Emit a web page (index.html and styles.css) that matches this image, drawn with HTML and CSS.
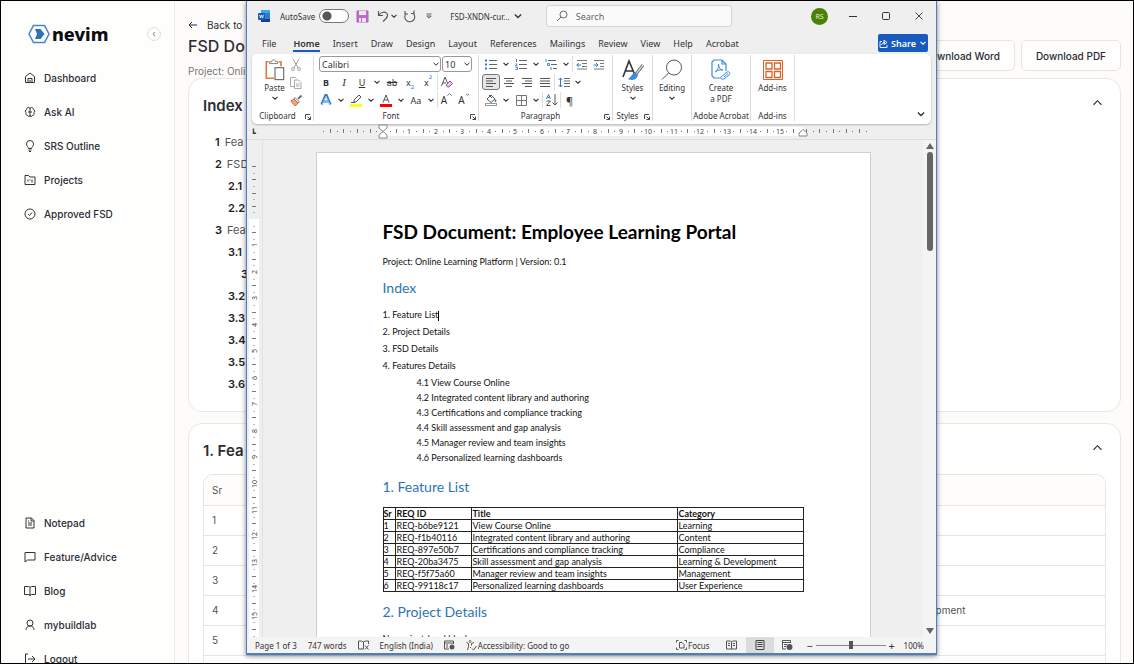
FILE: index.html
```html
<!DOCTYPE html>
<html lang="en">
<head>
    <meta charset="UTF-8">
    <meta name="viewport" content="width=device-width, initial-scale=1.0">
    <title>Nevim - FSD Document</title>
    <link rel="stylesheet" href="styles.css">
</head>
<body>

    <!-- shared icons -->
    <svg class="sprite" aria-hidden="true">
        <symbol id="chev" viewBox="0 0 8 8"><path d="M1.5 2.8 4 5.2l2.5-2.4" fill="none" stroke="currentColor" stroke-width="1.1"/></symbol>
        <symbol id="chev-up" viewBox="0 0 8 8"><path d="M.5 6 4 2.4 7.5 6" fill="none" stroke="currentColor" stroke-width="1"/></symbol>
        <symbol id="launch" viewBox="0 0 8 8"><path d="M1.500 6V1.500H6M3.500 3.500l3 3M6.500 3.500v3h-3" fill="none" stroke="currentColor" stroke-width=".9"/></symbol>
    </svg>

    <div class="app">
        <aside class="sidebar">
            <div class="brand">
                <a class="logo" href="#" aria-label="nevim">
                    <svg width="22" height="20" viewBox="0 0 22 20">
                        <path d="M5.500 1.500h11L21 10l-4.500 8.500h-11L1 10z" fill="none" stroke="#4a86cf" stroke-width="1.600"/>
                        <path d="M7 5h5.500l4 5-4 5H7l2-5z" fill="#2f6fc0"/>
                    </svg>
                    <span>nevim</span>
                </a>
                <button class="collapse" aria-label="Collapse sidebar">‹</button>
            </div>
            <nav class="menu">
                <a href="#"><svg viewBox="0 0 24 24"><path d="M3 9l9-7 9 7v12H3zM8 21v-8h8v8M12 21v-5"/></svg>Dashboard</a>
                <a href="#"><svg viewBox="0 0 24 24"><path d="M12 3v18M12 5C9 1 5 3 5.500 7 2 8 2 12 4 13c-1 4 1 6 3.500 6 1 3 4 2.500 4.500 0M12 5c3-4 7-2 6.500 2 3.500 1 3.500 5 1.500 6 1 4-1 6-3.500 6-1 3-4 2.500-4.500 0M8 12h8"/></svg>Ask AI</a>
                <a href="#"><svg viewBox="0 0 24 24"><path d="M9 17c0-3-4-4-4-9a7 7 0 0114 0c0 5-4 6-4 9zM9 20h6M10 23h4"/></svg>SRS Outline</a>
                <a href="#"><svg viewBox="0 0 24 24"><path d="M2 3h7l3 3h10v15H2zM8 11v4M12 11v2M16 11v6"/></svg>Projects</a>
                <a href="#"><svg viewBox="0 0 24 24"><circle cx="12" cy="12" r="10"/><path d="M8 12l3 3 5-6"/></svg>Approved FSD</a>
            </nav>
            <nav class="menu menu-bottom">
                <a href="#"><svg viewBox="0 0 24 24"><path d="M4 2h11l5 5v15H4zM14 2v6h6M8 12h8M8 16h8M8 8h2"/></svg>Notepad</a>
                <a href="#"><svg viewBox="0 0 24 24"><path d="M2 3h20v15H7l-5 4z"/></svg>Feature/Advice</a>
                <a href="#"><svg viewBox="0 0 24 24"><path d="M12 6c0-2-1-3-3-3H1v16h8c2 0 3 1 3 3 0-2 1-3 3-3h8V3h-8c-2 0-3 1-3 3v16"/></svg>Blog</a>
                <a href="#"><svg viewBox="0 0 24 24"><circle cx="12" cy="8" r="6"/><path d="M4 22c0-5 3-8 8-8s8 3 8 8"/></svg>mybuildlab</a>
                <a href="#"><svg viewBox="0 0 24 24"><path d="M8 2H3v20h5M8 12h14M16 6l6 6-6 6"/></svg>Logout</a>
            </nav>
        </aside>

        <main class="content">
            <header class="page-head">
                <div>
                    <a class="back" href="#"><svg width="10" height="8" viewBox="0 0 10 8"><path d="M9 4H1M4 1 1 4l3 3" fill="none" stroke="currentColor"/></svg>Back to</a>
                    <h1>FSD Do</h1>
                    <p>Project: Onli</p>
                </div>
                <div class="downloads">
                    <button>Download Word</button>
                    <button>Download PDF</button>
                </div>
            </header>

            <section class="card index-card">
                <div class="card-head">
                    <h2>Index</h2>
                    <button aria-label="Collapse"><svg width="9" height="9"><use href="#chev-up"/></svg></button>
                </div>
                <ul class="toc">
                    <li><b>1</b>Fea</li>
                    <li><b>2</b>FSD</li>
                    <li class="sub"><b>2.1</b></li>
                    <li class="sub"><b>2.2</b></li>
                    <li><b>3</b>Fea</li>
                    <li class="sub"><b>3.1</b></li>
                    <li class="sub2"><b>3</b></li>
                    <li class="sub"><b>3.2</b></li>
                    <li class="sub"><b>3.3</b></li>
                    <li class="sub"><b>3.4</b></li>
                    <li class="sub"><b>3.5</b></li>
                    <li class="sub"><b>3.6</b></li>
                </ul>
            </section>

            <section class="card">
                <div class="card-head">
                    <h2>1. Fea</h2>
                    <button aria-label="Collapse"><svg width="9" height="9"><use href="#chev-up"/></svg></button>
                </div>
                <div class="table-wrap">
                    <table>
                        <tr><th>Sr</th><th></th></tr>
                        <tr><td>1</td><td></td></tr>
                        <tr><td>2</td><td></td></tr>
                        <tr><td>3</td><td></td></tr>
                        <tr><td>4</td><td>Development</td></tr>
                        <tr><td>5</td><td></td></tr>
                        <tr><td></td><td></td></tr>
                    </table>
                </div>
            </section>
        </main>
    </div>

    <div class="word">
        <div class="titlebar">
            <svg class="word-icon" width="12" height="12" viewBox="0 0 12 12"><rect x="3" y="0" width="9" height="12" rx="1" fill="#2b7cd3"/><rect x="3" y="0" width="9" height="3" fill="#41a5ee"/><rect x="3" y="9" width="9" height="3" fill="#103f91"/><rect x="0" y="3" width="7" height="7" rx="1" fill="#185abd"/><path d="M1.500 4.800l1 3.200 1-3 1 3 1-3.200" fill="none" stroke="#fff" stroke-width=".8"/></svg>
            <label class="autosave">AutoSave <input type="checkbox"></label>
            <button aria-label="Save"><svg width="13" height="13" viewBox="0 0 13 13"><path d="M1 1h11v11H1z" fill="#b86fc6" stroke="#b060c0"/><path d="M3 1h7v4H3zM3 8h2v4H3zM6 8h4v4H6z" fill="#f4e3f7"/></svg></button>
            <button class="undo" aria-label="Undo"><svg width="13" height="13" viewBox="0 0 13 13"><path d="M1.500 1v4.500H6M1.500 5.500C4 2 8 1 10 3.500c2 3-1 5-4 8" fill="none" stroke="#555" stroke-width="1.100"/></svg><svg width="8" height="8"><use href="#chev"/></svg></button>
            <button aria-label="Redo"><svg width="13" height="13" viewBox="0 0 13 13"><path d="M2 1v3h3M3 3.500a5 5 0 107-.5M11 .5V3.500H8" fill="none" stroke="#555" stroke-width="1.100"/></svg></button>
            <button class="customize" aria-label="Customize toolbar"><svg width="8" height="8" viewBox="0 0 8 8"><path d="M1.500 2h5M1.800 4h4.400L4 6.200z" fill="none" stroke="#555" stroke-width=".9"/></svg></button>
            <button class="filename">FSD-XNDN-cur... <svg width="10" height="10"><use href="#chev"/></svg></button>
            <div class="search">
                <svg width="12" height="12" viewBox="0 0 12 12"><circle cx="7.500" cy="4.500" r="3.500" fill="none" stroke="#666"/><path d="M5 7 1 11" stroke="#666"/></svg>
                <input type="text" placeholder="Search" aria-label="Search">
            </div>
            <span class="avatar">RS</span>
            <div class="win-buttons">
                <button aria-label="Minimize"><svg width="8" height="8"><path d="M0 4.500h8" stroke="#333"/></svg></button>
                <button aria-label="Maximize"><svg width="8" height="8"><rect x=".5" y=".5" width="7" height="7" rx="1" fill="none" stroke="#333"/></svg></button>
                <button aria-label="Close"><svg width="8" height="8"><path d="M.5.5l7 7M7.500.5l-7 7" stroke="#333" stroke-width=".9"/></svg></button>
            </div>
        </div>

        <div class="tabs">
            <button class="file">File</button>
            <button class="active">Home</button>
            <button>Insert</button>
            <button>Draw</button>
            <button>Design</button>
            <button>Layout</button>
            <button>References</button>
            <button>Mailings</button>
            <button>Review</button>
            <button>View</button>
            <button>Help</button>
            <button>Acrobat</button>
            <button class="share"><svg width="9" height="9" viewBox="0 0 9 9"><path d="M3 2.500H1v6h7V6M2.500 6c.5-2 2-2.500 3.500-2.500M5 1l3 2.500-3 2z" fill="none" stroke="#fff" stroke-width=".9"/></svg>Share<svg width="8" height="8"><use href="#chev"/></svg></button>
        </div>

        <div class="ribbon">
            <div class="group clipboard">
                <div class="tools side">
                    <button class="big"><svg width="22" height="22" viewBox="0 0 22 24"><path d="M4 3H1.500v18H10M15 3h2.500v5" fill="none" stroke="#e07b45" stroke-width="1.800"/><path d="M5 5V3h2.500c0-3 4-3 4 0H14v2z" fill="#fff" stroke="#777"/><rect x="11" y="9.500" width="9.500" height="13" fill="#fff" stroke="#666" stroke-width="1.200"/></svg>Paste<svg width="8" height="8"><use href="#chev"/></svg></button>
                    <div class="stack">
                        <button aria-label="Cut"><svg width="10" height="12" viewBox="0 0 10 12"><path d="M2 0l5 9M8 0 3 9" stroke="#999" fill="none" stroke-width=".9"/><circle cx="2" cy="10" r="1.500" fill="none" stroke="#aaa"/><circle cx="8" cy="10" r="1.500" fill="none" stroke="#aaa"/></svg></button>
                        <button aria-label="Copy"><svg width="12" height="12" viewBox="0 0 12 12"><path d="M4 9.500H.5v-9h5l1 1" fill="none" stroke="#aaa"/><path d="M4.500 3h4L11 5.500v6H4.500zM6 7h3.500M6 9h3.500" fill="none" stroke="#aaa"/></svg></button>
                        <button aria-label="Format Painter"><svg width="12" height="12" viewBox="0 0 12 12"><path d="M11.500.5 8 4" stroke="#555" stroke-width="1.600"/><path d="M5 2.500 9.500 7 8 8 4 4z" fill="#fff" stroke="#666" stroke-width=".8"/><path d="M4 4 .8 6l4.500 5L8 8z" fill="#f3a27b" stroke="#d9622b"/></svg></button>
                    </div>
                </div>
                <div class="caption launcher">Clipboard<svg width="8" height="8"><use href="#launch"/></svg></div>
            </div>

            <div class="group font">
                <div class="tools">
                    <div class="row">
                        <select class="face" aria-label="Font"><option>Calibri</option></select>
                        <select class="size" aria-label="Font size"><option>10</option></select>
                    </div>
                    <div class="row">
                        <button class="tool"><b>B</b></button>
                        <button class="tool"><i>I</i></button>
                        <button class="tool"><u>U</u></button>
                        <button class="drop" aria-label="Underline style"><svg width="8" height="8"><use href="#chev"/></svg></button>
                        <button class="tool"><s>ab</s></button>
                        <button class="tool">x<sub>2</sub></button>
                        <button class="tool">x<sup>2</sup></button>
                        <button class="tool rule" aria-label="Clear formatting"><svg width="12" height="12" viewBox="0 0 12 12"><path d="M.5 10 4 1l2.500 6M2 7h3" fill="none" stroke="#555"/><path d="M5 9l4-4 2.500 2.500-3.500 3.500H6.500z" fill="#e6c5ee" stroke="#a04bb5"/></svg></button>
                    </div>
                    <div class="row">
                        <button class="tool" aria-label="Text effects"><svg width="12" height="12" viewBox="0 0 12 12"><path d="M1.500 10.500 5.500 1h1l4 9.500M3.500 7.500h5" fill="none" stroke="#2f7bd0" stroke-width="2.200"/><path d="M2 10.500 6 2l4 8.500M4 7.500h4" fill="none" stroke="#b9d8f5" stroke-width=".6"/></svg></button>
                        <button class="drop" aria-label="More effects"><svg width="8" height="8"><use href="#chev"/></svg></button>
                        <button class="tool" aria-label="Highlight"><svg width="13" height="13" viewBox="0 0 13 13"><path d="M4 6l5-5 2 2-5 5H4z" fill="#fff" stroke="#555"/><path d="M1 8.500h4" stroke="#555"/><rect x="0" y="10" width="12" height="3" fill="#ffff1a"/></svg></button>
                        <button class="drop" aria-label="Highlight color"><svg width="8" height="8"><use href="#chev"/></svg></button>
                        <button class="tool" aria-label="Font color"><svg width="13" height="13" viewBox="0 0 13 13"><path d="M3 8.500 6 1l3 7.500M4 6h4" fill="none" stroke="#555"/><rect x="0" y="10" width="12" height="3" fill="#f00"/></svg></button>
                        <button class="drop" aria-label="More font colors"><svg width="8" height="8"><use href="#chev"/></svg></button>
                        <button class="tool">Aa</button>
                        <button class="drop" aria-label="Change case"><svg width="8" height="8"><use href="#chev"/></svg></button>
                        <button class="tool rule grow">A<svg width="5" height="5"><use href="#chev-up"/></svg></button>
                        <button class="tool grow">A<svg width="5" height="5"><use href="#chev"/></svg></button>
                    </div>
                </div>
                <div class="caption launcher">Font<svg width="8" height="8"><use href="#launch"/></svg></div>
            </div>

            <div class="group paragraph">
                <div class="tools">
                    <div class="row">
                        <button class="tool" aria-label="Bullets"><svg width="12" height="11" viewBox="0 0 12 11"><path d="M4 1.500h8M4 5.500h8M4 9.500h8" stroke="#666"/><path d="M0 1.500h2M0 5.500h2M0 9.500h2" stroke="#2f7bd0" stroke-width="2"/></svg></button>
                        <button class="drop" aria-label="Bullet library"><svg width="8" height="8"><use href="#chev"/></svg></button>
                        <button class="tool" aria-label="Numbering"><svg width="12" height="11" viewBox="0 0 12 11"><path d="M4 1.500h8M4 5.500h8M4 9.500h8" stroke="#666"/><path d="M1.500 0v3M.5 5h1.500L.5 7h2M.5 8.500h2v2h-2" fill="none" stroke="#2f7bd0" stroke-width=".9"/></svg></button>
                        <button class="drop" aria-label="Number library"><svg width="8" height="8"><use href="#chev"/></svg></button>
                        <button class="tool" aria-label="Multilevel list"><svg width="12" height="11" viewBox="0 0 12 11"><path d="M3 1.500h8M6 5.500h6M8 9.500h4" stroke="#666"/><path d="M1 0v3M2.500 4.500h2v2h-2zM6 8v3" fill="none" stroke="#2f7bd0" stroke-width=".9"/></svg></button>
                        <button class="drop" aria-label="List library"><svg width="8" height="8"><use href="#chev"/></svg></button>
                        <button class="tool rule" aria-label="Decrease indent"><svg width="12" height="11" viewBox="0 0 12 11"><path d="M1 1.500h10M6 4.500h5M6 7.500h5M1 10h10" stroke="#777"/><path d="M5 6H.8M2.800 4 .8 6l2 2" fill="none" stroke="#2f7bd0"/></svg></button>
                        <button class="tool" aria-label="Increase indent"><svg width="12" height="11" viewBox="0 0 12 11"><path d="M1 1.500h10M7 4.500h4M7 7.500h4M1 10h10" stroke="#777"/><path d="M.5 6h4.500M3 4l2 2-2 2" fill="none" stroke="#2f7bd0"/></svg></button>
                    </div>
                    <div class="row">
                        <button class="tool pressed" aria-label="Align left"><svg width="12" height="11" viewBox="0 0 12 11"><path d="M1 1.500h10M1 4h7M1 6.500h10M1 9.500h7" stroke="#555"/></svg></button>
                        <button class="tool" aria-label="Center"><svg width="12" height="11" viewBox="0 0 12 11"><path d="M1 1.500h10M3 4h6M1 6.500h10M3 9.500h6" stroke="#555"/></svg></button>
                        <button class="tool" aria-label="Align right"><svg width="12" height="11" viewBox="0 0 12 11"><path d="M1 1.500h10M4 4h7M1 6.500h10M4 9.500h7" stroke="#555"/></svg></button>
                        <button class="tool" aria-label="Justify"><svg width="12" height="11" viewBox="0 0 12 11"><path d="M1 1.500h10M1 4h10M1 6.500h10M1 9.500h10" stroke="#555"/></svg></button>
                        <button class="tool rule" aria-label="Line spacing"><svg width="12" height="11" viewBox="0 0 12 11"><path d="M6 1.500h6M6 4h6M6 6.500h6M6 9.500h6" stroke="#666"/><path d="M2.500 1v9M.5 3l2-2 2 2M.5 8l2 2 2-2" fill="none" stroke="#2f7bd0"/></svg></button>
                        <button class="drop" aria-label="Spacing options"><svg width="8" height="8"><use href="#chev"/></svg></button>
                    </div>
                    <div class="row">
                        <button class="tool" aria-label="Shading"><svg width="12" height="12" viewBox="0 0 12 12"><path d="M2 5l4-4 4 4-4 3.500zM4 1l3 3" fill="none" stroke="#555"/><path d="M10.500 5.500v2.500" stroke="#2f7bd0" stroke-width="1.500"/><rect x=".5" y="9.500" width="11" height="2" fill="#fff" stroke="#999"/></svg></button>
                        <button class="drop" aria-label="Shading color"><svg width="8" height="8"><use href="#chev"/></svg></button>
                        <button class="tool" aria-label="Borders"><svg width="11" height="11" viewBox="0 0 11 11"><path d="M.5.5h10v10H.5zM5.500.5v10M.5 5.500h10" fill="none" stroke="#777"/></svg></button>
                        <button class="drop" aria-label="Border options"><svg width="8" height="8"><use href="#chev"/></svg></button>
                        <button class="tool rule" aria-label="Sort"><svg width="12" height="12" viewBox="0 0 12 12"><path d="M.5 5 2.500.5 4.500 5M1.300 3.500h2.500" fill="none" stroke="#2f7bd0"/><path d="M.5 7h4l-4 4.500h4M9 0v11M6.500 8.500 9 11l2.500-2.500" fill="none" stroke="#555"/></svg></button>
                        <button class="tool rule mark">¶</button>
                    </div>
                </div>
                <div class="caption launcher">Paragraph<svg width="8" height="8"><use href="#launch"/></svg></div>
            </div>

            <div class="group styles">
                <div class="tools side">
                    <button class="big"><svg width="24" height="22" viewBox="0 0 24 22"><path d="M2 18 8 2l5.500 13M4.500 12H12" fill="none" stroke="#333" stroke-width="1.600"/><path d="M22 6l-7 9" stroke="#777" stroke-width="3"/><path d="M22 6l-7 9" stroke="#fff"/><path d="M15 14c-4-1-4 4-8 6 4 2 9 1 10-4z" fill="#3c8be0"/></svg>Styles<svg width="8" height="8"><use href="#chev"/></svg></button>
                </div>
                <div class="caption launcher">Styles<svg width="8" height="8"><use href="#launch"/></svg></div>
            </div>

            <div class="group editing">
                <div class="tools side">
                    <button class="big"><svg width="22" height="22" viewBox="0 0 22 22"><circle cx="13" cy="8.500" r="7.500" fill="none" stroke="#555"/><path d="M7.500 14 1 20.500" stroke="#555"/></svg>Editing<svg width="8" height="8"><use href="#chev"/></svg></button>
                </div>
            </div>

            <div class="group acrobat">
                <div class="tools side">
                    <button class="big"><svg width="20" height="22" viewBox="0 0 20 22"><path d="M10 19H3l-2-2V3l2-2h8l4 4v7M11 1v4h4" fill="none" stroke="#3f8ddb" stroke-width="1.200"/><path d="M4 13c3-2 4-5 3.500-8C8 10 10 11 12 11c-3-.5-5 0-8 2z" fill="none" stroke="#3f8ddb"/><path d="M10 18l6-5c2-1 4 1 2 3l-5 4c-2 1-4-1-3-2zM13 18l4-3.500" fill="#fff" stroke="#3f8ddb"/></svg>Create<br>a PDF</button>
                </div>
                <div class="caption">Adobe Acrobat</div>
            </div>

            <div class="group addins">
                <div class="tools side">
                    <button class="big"><svg width="20" height="22" viewBox="0 0 20 22"><path d="M.5 1.500h19v19H.5z" fill="none" stroke="#d9622b"/><path d="M3 4h6v6H3zM11.500 4h6v6h-6zM3 12.500h6v6H3zM11.500 12.500h6v6h-6z" fill="none" stroke="#d9622b" stroke-width="1.300"/></svg>Add-ins</button>
                </div>
                <div class="caption">Add-ins</div>
            </div>

            <button class="ribbon-toggle" aria-label="Collapse ribbon"><svg width="10" height="10"><use href="#chev"/></svg></button>
        </div>

        <div class="ruler-row">
            <span class="tab-stop">┗</span>
            <svg class="h-ruler" id="h-ruler" height="16"></svg>
        </div>

        <div class="work">
            <div class="v-ruler-box"><svg class="v-ruler" id="v-ruler" width="16"></svg></div>
            <div class="desk">
                <article class="page">
                    <h1>FSD Document: Employee Learning Portal</h1>
                    <p>Project: Online Learning Platform | Version: 0.1</p>
                    <h2>Index</h2>
                    <ul class="chapters">
                        <li>1. Feature List<span class="caret"></span></li>
                        <li>2. Project Details</li>
                        <li>3. FSD Details</li>
                        <li>4. Features Details</li>
                    </ul>
                    <ul class="features">
                        <li>4.1 View Course Online</li>
                        <li>4.2 Integrated content library and authoring</li>
                        <li>4.3 Certifications and compliance tracking</li>
                        <li>4.4 Skill assessment and gap analysis</li>
                        <li>4.5 Manager review and team insights</li>
                        <li>4.6 Personalized learning dashboards</li>
                    </ul>
                    <h2>1. Feature List</h2>
                    <table>
                        <colgroup><col class="c-sr"><col class="c-id"><col class="c-title"><col></colgroup>
                        <tr><th>Sr</th><th>REQ ID</th><th>Title</th><th>Category</th></tr>
                        <tr><td>1</td><td>REQ-b6be9121</td><td>View Course Online</td><td>Learning</td></tr>
                        <tr><td>2</td><td>REQ-f1b40116</td><td>Integrated content library and authoring</td><td>Content</td></tr>
                        <tr><td>3</td><td>REQ-897e50b7</td><td>Certifications and compliance tracking</td><td>Compliance</td></tr>
                        <tr><td>4</td><td>REQ-20ba3475</td><td>Skill assessment and gap analysis</td><td>Learning &amp; Development</td></tr>
                        <tr><td>5</td><td>REQ-f5f75a60</td><td>Manager review and team insights</td><td>Management</td></tr>
                        <tr><td>6</td><td>REQ-99118c17</td><td>Personalized learning dashboards</td><td>User Experience</td></tr>
                    </table>
                    <h2>2. Project Details</h2>
                    <p>No project-level blocks.</p>
                </article>
            </div>
            <div class="scrollbar">
                <svg width="8" height="6"><path d="M4 0l4 6H0z" fill="#666"/></svg>
                <span class="thumb"></span>
                <svg width="8" height="6"><path d="M0 0h8L4 6z" fill="#666"/></svg>
            </div>
        </div>

        <div class="status">
            <span>Page 1 of 3</span>
            <span>747 words</span>
            <svg width="11" height="10" viewBox="0 0 11 10"><path d="M5.500 9H.5V1h3l2 1 2-1h3v3M5.500 2v7M7 5.500l3.500 4M10.500 5.500 7 9.500" fill="none" stroke="#555"/></svg>
            <span>English (India)</span>
            <svg width="11" height="10" viewBox="0 0 11 10"><path d="M5 9H.5V1h9v3M.5 3h9M2 5h2M2 7h2" fill="none" stroke="#555"/><circle cx="8" cy="7" r="2.500" fill="#555"/></svg>
            <span class="a11y"><svg width="11" height="11" viewBox="0 0 11 11"><circle cx="4" cy="1.500" r="1" fill="none" stroke="#555" stroke-width=".8"/><path d="M.5 2.500l2 1v3L1.500 10M8 2.500l-2.500 1v2M4 7l1 1M6 8.500l1.500 1.500 3-4" fill="none" stroke="#555"/></svg>Accessibility: Good to go</span>
            <button class="focus"><svg width="11" height="10" viewBox="0 0 11 10"><path d="M2.500.5h-2v2M.5 7.500v2h2M8.500.5h2v2M10.500 7.500v2h-2M3.500 2.500h2.500l2 2v3.500H3.500z" fill="none" stroke="#555"/></svg>Focus</button>
            <button class="view" aria-label="Read mode"><svg width="11" height="10" viewBox="0 0 11 10"><path d="M.5 1h4l1 1 1-1h4v8H.5zM5.500 2v7M2 3.500h2M2 5.500h2M7 3.500h2M7 5.500h2" fill="none" stroke="#555"/></svg></button>
            <button class="view on" aria-label="Print layout"><svg width="10" height="10" viewBox="0 0 10 10"><path d="M1 .5h8v9H1zM2.500 2.500h5M2.500 4.500h5M2.500 6.500h5" fill="none" stroke="#444"/></svg></button>
            <button class="view" aria-label="Web layout"><svg width="11" height="10" viewBox="0 0 11 10"><path d="M4 9H.5V.5h8V3M.5 2.500h8M2 4.500h3M2 6.500h2" fill="none" stroke="#555"/><circle cx="7.500" cy="7" r="3" fill="#555"/></svg></button>
            <button class="step" aria-label="Zoom out">−</button>
            <input type="range" min="0" max="100" value="50" aria-label="Zoom">
            <button class="step" aria-label="Zoom in">+</button>
            <span class="pct">100%</span>
        </div>
    </div>

    <script src="script.js"></script>
</body>
</html>
```
FILE: styles.css
```css
* {
    box-sizing: border-box;
}

body {
    margin: 0;
    height: 100vh;
    position: relative;
    overflow: hidden;
    border: 1px solid #000;
    font-family: Inter, "Liberation Sans", sans-serif;
    font-size: 11px;
    color: #2b2d33;
    background: #fdfcfa;
}

h1, h2, p, ul {
    margin: 0;
    padding: 0;
}

ul {
    list-style: none;
}

a {
    color: inherit;
    text-decoration: none;
}

button, input, select {
    font: inherit;
    color: inherit;
}

button {
    display: flex;
    align-items: center;
    justify-content: center;
    padding: 0;
    border: 0;
    background: none;
}

svg {
    flex: none;
}

.sprite {
    position: absolute;
    width: 0;
    height: 0;
}

/* dashboard */
.app {
    display: flex;
    height: 100%;
    overflow: hidden;
}

.sidebar {
    flex: none;
    display: flex;
    flex-direction: column;
    width: 174px;
    padding: 20px 13px 0 23px;
    border-right: 1px solid #efeae4;
    background: #fefefd;
}

.brand {
    display: flex;
    align-items: center;
    justify-content: space-between;
    height: 26px;
    margin-bottom: 14px;
    padding-left: 4px;
}

.logo {
    display: flex;
    align-items: center;
    gap: 2px;
    font-family: "Noto Sans", sans-serif;
    font-size: 18px;
    font-weight: 800;
    line-height: 20px;
    color: #0c0c10;
}

.collapse {
    width: 14px;
    height: 14px;
    border: 1px solid #e6dfd6;
    border-radius: 50%;
    font-size: 9px;
    line-height: 10px;
    color: #777;
}

.menu a {
    display: flex;
    align-items: center;
    gap: 8px;
    height: 34px;
    font-size: 10px;
    font-weight: 500;
}

.menu svg {
    width: 12px;
    height: 12px;
    fill: none;
    stroke: #333;
    stroke-width: 2;
    stroke-linejoin: round;
}

.menu-bottom {
    margin-top: auto;
    margin-bottom: -13px;
}

.content {
    flex: 1;
    min-width: 0;
    padding: 16px 12px 0 13px;
}

.page-head {
    display: flex;
    justify-content: space-between;
    height: 61px;
}

.back {
    display: flex;
    align-items: center;
    gap: 9px;
    height: 16px;
    font-size: 10px;
}

.page-head h1 {
    font-size: 16px;
    font-weight: 500;
    line-height: 26px;
}

.page-head p {
    font-size: 10px;
    line-height: 24px;
    color: #777;
}

.downloads {
    display: flex;
    align-items: flex-start;
    gap: 6px;
    padding-top: 23px;
}

.downloads button {
    height: 31px;
    padding: 0 14px;
    border: 1px solid #ebe5d9;
    border-radius: 5px;
    background: #fefefd;
    font-size: 10px;
    font-weight: 500;
}

.card {
    padding: 14px;
    border: 1px solid #ece7df;
    border-radius: 14px;
    background: #fff;
}

.card-head {
    display: flex;
    justify-content: space-between;
    align-items: center;
    height: 24px;
    padding-right: 4px;
}

.card-head h2 {
    font-size: 15px;
    font-weight: 600;
}

.card-head button {
    margin-bottom: 6px;
}

.index-card {
    height: 334px;
    margin-bottom: 11px;
}

.toc {
    padding: 14px 0 0 12px;
    line-height: 22px;
    color: #555;
}

.toc b {
    margin-right: 5px;
    font-weight: 600;
    color: #222;
}

.toc .sub {
    padding-left: 13px;
}

.toc .sub2 {
    padding-left: 26px;
}

.table-wrap {
    margin-top: 12px;
    border: 1px solid #ece4d8;
    border-radius: 10px;
    overflow: hidden;
}

.table-wrap table {
    width: 100%;
    border-collapse: collapse;
}

.table-wrap th, .table-wrap td {
    height: 30px;
    padding: 0 8px;
    border-bottom: 1px solid #ece4d8;
    font-size: 10px;
    font-weight: 400;
    text-align: left;
    color: #555;
}

.table-wrap th {
    background: #fefdfc;
}

.table-wrap td:last-child {
    width: 210px;
}

/* word window */
.word {
    position: absolute;
    top: 0;
    bottom: 8px;
    left: 245px;
    right: 196px;
    display: flex;
    flex-direction: column;
    border: solid #4a7fc6;
    border-width: 0 1px 2px;
    box-shadow: 0 1px 5px rgba(0, 0, 0, .5);
    background: #efefef;
    font-family: "Noto Sans", "Open Sans", sans-serif;
    font-size: 8px;
    color: #333;
}

.titlebar {
    display: flex;
    align-items: center;
    height: 30px;
    padding: 0 13px 0 11px;
}

.autosave {
    display: flex;
    align-items: center;
    gap: 4px;
    margin: 0 7px 0 10px;
}

.autosave input {
    appearance: none;
    width: 30px;
    height: 14px;
    margin: 0;
    border: 1px solid #777;
    border-radius: 7px;
    background: radial-gradient(circle at 7px 6px, #555 4px, #fff 5px);
}

.undo {
    margin: 0 5px 0 8px;
}

.customize {
    margin: 0 17px 0 9px;
}

.filename {
    gap: 3px;
}

.search {
    display: flex;
    align-items: center;
    gap: 8px;
    width: 186px;
    height: 22px;
    margin-left: 23px;
    padding: 0 9px;
    border: 1px solid #d4d4d4;
    border-radius: 3px;
    background: #fafafa;
}

.search input {
    width: 100%;
    padding: 0;
    border: 0;
    outline: 0;
    background: none;
    font-size: 9px;
}

.search input::placeholder {
    color: #666;
}

.avatar {
    width: 17px;
    height: 17px;
    margin-left: auto;
    border-radius: 50%;
    background: #498205;
    font-size: 7px;
    line-height: 17px;
    text-align: center;
    color: #e4f0d4;
}

.win-buttons {
    display: flex;
    gap: 25px;
    margin-left: 21px;
}

.tabs {
    display: flex;
    align-items: center;
    gap: 13px;
    height: 23px;
    padding: 1px 8px 0 15px;
    font-size: 9px;
}

.tabs button {
    height: 18px;
    padding-top: 2px;
    border-bottom: 2px solid transparent;
}

.tabs .file {
    margin-right: 4px;
}

.tabs .active {
    border-color: #185abd;
    font-weight: 600;
}

.tabs .share {
    gap: 3px;
    width: 50px;
    margin-left: auto;
    padding: 0;
    border: 0;
    border-radius: 2px;
    background: #185abd;
    font-weight: 600;
    color: #fff;
}

.ribbon {
    display: flex;
    height: 70px;
    margin: 0 5px;
    border-radius: 5px;
    background: #fff;
    box-shadow: 0 1px 2px rgba(0, 0, 0, .25);
}

.group {
    display: flex;
    flex-direction: column;
    position: relative;
    margin: 1px 0 3px;
    padding: 0 3px;
    border-right: 1px solid #dcdcdc;
}

.clipboard { width: 62px; }
.font { width: 165px; }
.paragraph { width: 134px; }
.styles { width: 40px; }
.editing { width: 39px; }
.acrobat { width: 59px; }
.addins { width: 44px; }

.tools {
    flex: 1;
    min-height: 0;
}

.tools.side {
    display: flex;
    justify-content: center;
    gap: 4px;
}

.stack {
    display: flex;
    flex-direction: column;
    gap: 6px;
    padding-top: 4px;
}

.big {
    flex-direction: column;
    justify-content: flex-start;
    gap: 1px;
    padding-top: 4px;
    line-height: 11px;
}

.caption {
    display: flex;
    justify-content: center;
    height: 10px;
    line-height: 10px;
    white-space: nowrap;
}

.caption.launcher {
    padding-right: 10px;
}

.caption svg {
    position: absolute;
    right: 1px;
    bottom: 0;
}

.row {
    display: flex;
    align-items: center;
    height: 18px;
}

.row select {
    appearance: none;
    height: 16px;
    padding: 0 2px;
    border: 1px solid #999;
    border-radius: 3px;
    font-size: 9px;
    background: url("data:image/svg+xml,%3Csvg xmlns='http://www.w3.org/2000/svg' width='8' height='8'%3E%3Cpath d='M1.5 2.8 4 5.2l2.5-2.4' fill='none' stroke='%23333'/%3E%3C/svg%3E") no-repeat right 0 center;
}

.row .face {
    width: 122px;
    margin-left: 2px;
}

.row .size {
    width: 30px;
    margin-left: 1px;
}

.tool {
    width: 18px;
    height: 16px;
    font-size: 9px;
}

.tool i {
    font-family: "Liberation Serif", serif;
    font-size: 11px;
}

.tool sub, .tool sup {
    font-size: 6px;
    line-height: 6px;
    color: #2f7bd0;
}

.tool sub { align-self: flex-end; }
.tool sup { align-self: flex-start; }

.tool.rule {
    border-left: 1px solid #ddd;
}

.tool.pressed {
    border: 1px solid #777;
    border-radius: 3px;
    background: #e6e6e6;
}

.grow {
    font-size: 10px;
}

.mark {
    font-size: 11px;
}

.grow svg {
    align-self: flex-start;
}

.drop {
    width: 12px;
}

.ribbon-toggle {
    align-self: flex-end;
    margin: 0 5px 5px auto;
}

.ruler-row {
    display: flex;
    justify-content: center;
    position: relative;
    height: 16px;
    border-bottom: 1px solid #ddd;
}

.tab-stop {
    position: absolute;
    left: 4px;
    top: 4px;
    font-size: 8px;
    line-height: 10px;
}

.h-ruler {
    width: 554px;
    margin-left: 4px;
}

.h-ruler text, .v-ruler text {
    font-size: 7px;
    text-anchor: middle;
    fill: #444;
}

.work {
    flex: 1;
    min-height: 0;
    display: flex;
}

.v-ruler-box {
    flex: none;
    width: 16px;
    overflow: hidden;
    border-right: 1px solid #e2e2e2;
}

.v-ruler {
    height: 100%;
}

.desk {
    flex: 1;
    display: flex;
    justify-content: center;
    min-width: 0;
    padding-top: 12px;
    overflow: hidden;
}

.page {
    width: 555px;
    height: 785px;
    padding: 66px;
    border: 1px solid #d0d0d0;
    background: #fff;
    font-family: Lato, sans-serif;
    font-size: 9px;
    color: #111;
}

.page h1 {
    margin-bottom: 8px;
    font-size: 19px;
    line-height: 26px;
    color: #000;
    white-space: nowrap;
}

.page p {
    line-height: 17px;
}

.page h2 {
    margin: 8px 0;
    font-size: 14px;
    font-weight: 400;
    line-height: 20px;
    color: #2e74b5;
}

.chapters {
    line-height: 17px;
}

.caret {
    display: inline-block;
    width: 1px;
    height: 10px;
    background: #000;
    vertical-align: middle;
}

.features {
    padding: 1px 0 4px 34px;
    line-height: 15px;
}

.page table {
    width: 421px;
    margin: 10px 0;
    border-collapse: collapse;
    table-layout: fixed;
}

.page th, .page td {
    height: 12px;
    padding: 0 1px;
    border: 1px solid #222;
    line-height: 11px;
    text-align: left;
    white-space: nowrap;
}

.page th:first-child, .page td:first-child {
    padding: 0;
}

.c-sr { width: 12px; }
.c-id { width: 76px; }
.c-title { width: 206px; }

.scrollbar {
    flex: none;
    display: flex;
    flex-direction: column;
    align-items: center;
    width: 13px;
    padding: 3px 0;
    background: #f4f4f4;
}

.thumb {
    width: 6px;
    height: 99px;
    margin: 3px 0 auto;
    border-radius: 3px;
    background: #666;
}

.status {
    display: flex;
    align-items: center;
    height: 16px;
    padding: 0 12px 0 8px;
    background: #f4f4f4;
}

.status > * {
    margin-right: 11px;
}

.status .a11y, .status .focus {
    display: flex;
    align-items: center;
    gap: 1px;
}

.status .focus {
    margin-left: auto;
    margin-right: 8px;
}

.status .view {
    width: 28px;
    height: 16px;
    margin: 0;
}

.status .view.on {
    background: #dcdcdc;
}

.status .step {
    width: 8px;
    margin: 0 2px;
    font-size: 11px;
}

.status .view + .step {
    margin-left: 4px;
}

.status .pct {
    margin: 0 0 0 6px;
}

.status input {
    appearance: none;
    width: 70px;
    height: 8px;
    margin: 0;
    background: linear-gradient(#888, #888) center / 100% 1px no-repeat;
}

.status input::-webkit-slider-thumb {
    appearance: none;
    width: 4px;
    height: 8px;
    background: #555;
}
```
FILE: script.js
```js
// one centimetre on the ruler, split in four
const CM = 26.45;

function drawRuler(id, vertical, zero, start, end, whiteEnd) {
    const svg = document.getElementById(id);
    let out = vertical
        ? `<rect x="2" y="${zero}" width="10" height="${whiteEnd - zero}" fill="#fff"/>`
        : `<rect x="${zero}" y="3" width="${whiteEnd - zero}" height="9" fill="#fff"/>`;

    for (let i = Math.ceil((start - zero) / CM * 4); zero + i * CM / 4 <= end; i++) {
        const pos = Math.round(zero + i * CM / 4);
        if (i === 0) continue;
        if (i > 0 && i % 4 === 0 && pos < whiteEnd) {
            out += vertical
                ? `<text transform="translate(10 ${pos}) rotate(-90)">${i / 4}</text>`
                : `<text x="${pos}" y="10">${i / 4}</text>`;
        } else {
            const len = i % 2 === 0 ? 4 : 1;
            out += vertical
                ? `<rect x="${7 - len / 2}" y="${pos}" width="${len}" height="1" fill="#777"/>`
                : `<rect x="${pos}" y="${7 - Math.floor(len / 2)}" width="1" height="${len}" fill="#777"/>`;
        }
    }
    if (!vertical) {
        out += `<path d="M${zero - 4} 1h8v3l-4 3.500-4-3.500zM${zero - 4} 14v-3l4-3.500 4 3.500v3zM${whiteEnd - 4} 12V9l4-3.500 4 3.500v3z" fill="#fff" stroke="#888"/>`;
    }
    svg.innerHTML = out;
}

drawRuler('h-ruler', false, 66, 0, 550, 486);
drawRuler('v-ruler', true, 79, 26, 497, 520);
```
